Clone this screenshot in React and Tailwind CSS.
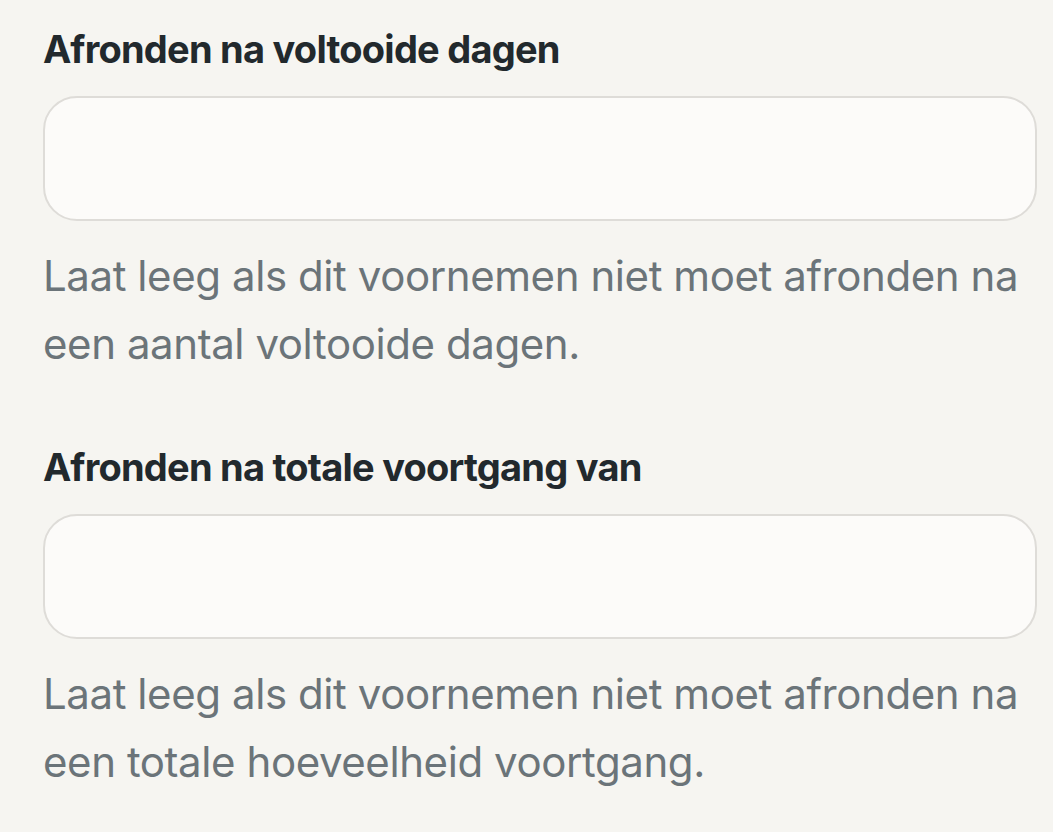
import React from "react";

const fields = [
  {
    id: "days",
    label: "Afronden na voltooide dagen",
    hint: "Laat leeg als dit voornemen niet moet afronden na een aantal voltooide dagen.",
  },
  {
    id: "progress",
    label: "Afronden na totale voortgang van",
    hint: "Laat leeg als dit voornemen niet moet afronden na een totale hoeveelheid voortgang.",
  },
];

const Field = ({ id, label, hint }) => (
  <div className="flex flex-col">
    <label
      htmlFor={id}
      className="text-[38px] leading-[44px] font-bold tracking-[-0.02em] text-[#22292d]"
    >
      {label}
    </label>
    <input
      id={id}
      type="number"
      className="mt-[25px] h-[125px] w-full rounded-[34px] border-2 border-[#dedcd8] bg-[#fcfbf9] px-8 text-[36px] outline-none"
    />
    <p className="mt-[21px] text-[42px] leading-[68px] tracking-[-0.01em] text-[#6b7479]">
      {hint}
    </p>
  </div>
);

const App = () => {
  return (
    <div
      className="min-h-screen bg-[#f6f5f1] pl-[43px] pr-[16px] pt-[27px]"
      style={{ fontFamily: "Inter, 'Noto Sans', sans-serif" }}
    >
      <div className="flex flex-col gap-[67px]">
        {fields.map((f) => (
          <Field key={f.id} {...f} />
        ))}
      </div>
    </div>
  );
};

export default App;
